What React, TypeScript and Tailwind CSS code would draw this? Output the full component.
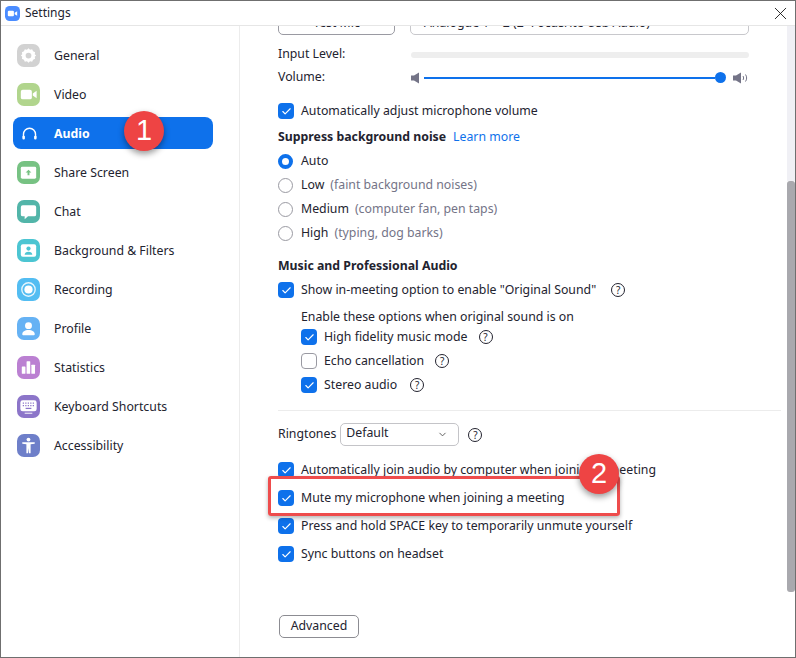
import { Check, ChevronDown, X } from "lucide-react";
import type { ReactNode } from "react";

function Tile({ color, children }: { color: string; children?: ReactNode }) {
  return (
    <div className={`flex h-[23px] w-[23px] shrink-0 items-center justify-center rounded-[7px] ${color}`}>
      <svg viewBox="0 0 24 24" className="h-[23px] w-[23px]" fill="#fff">
        {children}
      </svg>
    </div>
  );
}

const navItems: { label: string; color: string; icon: ReactNode }[] = [
  {
    label: "General",
    color: "bg-[#d2d2d2]",
    icon: (
      <path
        fillRule="evenodd"
        d="M12 4.500l1.600 1.600 2.200-.5 1 2 2.100.9-.4 2.200L20 12l-1.500 1.300.4 2.200-2.100.9-1 2-2.200-.5L12 19.500l-1.600-1.600-2.200.5-1-2-2.100-.9.4-2.200L4 12l1.500-1.300-.4-2.200 2.100-.9 1-2 2.200.5zM12 9a3 3 0 1 0 0 6 3 3 0 0 0 0-6z"
      />
    ),
  },
  {
    label: "Video",
    color: "bg-[#b1d58d]",
    icon: (
      <>
        <rect x="4" y="7" width="11.500" height="10" rx="2" />
        <path d="M16.500 11l4-3v8l-4-3z" />
      </>
    ),
  },
  {
    label: "Share Screen",
    color: "bg-[#77c283]",
    icon: (
      <>
        <rect x="4" y="6" width="16" height="12.500" rx="1.500" />
        <path fill="#77c283" d="M12 9l3 3h-2v2.800h-2V12H9z" />
      </>
    ),
  },
  {
    label: "Chat",
    color: "bg-[#52b5a9]",
    icon: <path d="M6 5.500h12a2 2 0 0 1 2 2v7.500a2 2 0 0 1-2 2h-6.500L8 20v-3H6a2 2 0 0 1-2-2V7.500a2 2 0 0 1 2-2z" />,
  },
  {
    label: "Background & Filters",
    color: "bg-[#4cc5d2]",
    icon: (
      <>
        <rect x="4" y="5.500" width="16" height="13" rx="2" />
        <circle cx="12" cy="10" r="2.200" fill="#4cc5d2" />
        <path fill="#4cc5d2" d="M8 16.500c0-2.200 1.800-3.300 4-3.300s4 1.100 4 3.300z" />
      </>
    ),
  },
  {
    label: "Recording",
    color: "bg-[#53bdf2]",
    icon: (
      <>
        <circle cx="12" cy="12" r="7" fill="none" stroke="#fff" strokeWidth="1.400" opacity=".85" />
        <circle cx="12" cy="12" r="4.300" />
      </>
    ),
  },
  {
    label: "Profile",
    color: "bg-[#66b2f4]",
    icon: (
      <>
        <circle cx="12" cy="9" r="3.600" />
        <path d="M5.500 18c0-2.800 2.600-4.500 6.500-4.500s6.500 1.700 6.500 4.500c0 .8-.6 1-1.200 1H6.700c-.6 0-1.200-.2-1.200-1z" />
      </>
    ),
  },
  {
    label: "Statistics",
    color: "bg-[#bb80d2]",
    icon: (
      <>
        <rect x="5" y="11" width="3.800" height="7.500" rx=".6" />
        <rect x="10" y="5.500" width="3.800" height="13" rx=".6" />
        <rect x="15" y="9" width="3.800" height="9.500" rx=".6" />
      </>
    ),
  },
  {
    label: "Keyboard Shortcuts",
    color: "bg-[#8c75c9]",
    icon: (
      <>
        <rect x="3.500" y="5.500" width="17" height="11.500" rx="2.500" />
        <path stroke="#8c75c9" strokeWidth="1.300" strokeDasharray="1.300 1.300" fill="none" d="M6 8.500h12M6 11h12" />
        <path stroke="#8c75c9" strokeWidth="1.300" d="M9 14h6" />
        <path d="M8 18.500h8v1H8z" />
      </>
    ),
  },
  {
    label: "Accessibility",
    color: "bg-[#6e7fc9]",
    icon: (
      <>
        <circle cx="12" cy="5.800" r="2" />
        <path d="M5.500 8.500h13v1.700l-4.300.6V20h-1.700l-.5-5.500-.5 5.500H9.800v-9.200l-4.300-.6z" />
      </>
    ),
  },
];

function NavRow({ label, color, icon }: { label: string; color: string; icon: ReactNode }) {
  return (
    <div className="flex h-[39px] items-center pl-[16px]">
      <Tile color={color}>{icon}</Tile>
      <span className="ml-[14px] pt-[2px] text-[#23232f]">{label}</span>
    </div>
  );
}

function Box({ checked = true }: { checked?: boolean }) {
  if (!checked) {
    return <div className="h-4 w-4 shrink-0 rounded-[4px] border border-[#9a9aa2] bg-white" />;
  }
  return (
    <div className="flex h-4 w-4 shrink-0 items-center justify-center rounded-[4px] bg-[#0e71eb]">
      <Check size={11} strokeWidth={2.500} className="text-white" />
    </div>
  );
}

function Help({ className = "" }: { className?: string }) {
  return (
    <div
      className={`flex h-[14px] w-[14px] shrink-0 items-center justify-center rounded-full border border-[#23232f] text-[10px] leading-none text-[#23232f] ${className}`}
    >
      ?
    </div>
  );
}

function CheckRow({
  label,
  checked,
  help,
  className = "",
}: {
  label: string;
  checked?: boolean;
  help?: string;
  className?: string;
}) {
  return (
    <div className={`flex items-center ${className}`}>
      <Box checked={checked} />
      <span className="ml-[7px]">{label}</span>
      {help && <Help className={help} />}
    </div>
  );
}

function Radio({ label, note, active }: { label: string; note?: string; active?: boolean }) {
  return (
    <div className="flex h-6 items-center">
      {active ? (
        <div className="h-[15px] w-[15px] shrink-0 rounded-full border-[4px] border-[#0e71eb] bg-white" />
      ) : (
        <div className="h-[15px] w-[15px] shrink-0 rounded-full border border-[#9a9aa2] bg-white" />
      )}
      <span className="ml-2">{label}</span>
      {note && <span className="ml-[6px] text-[#747487]">{note}</span>}
    </div>
  );
}

function Speaker({ waves }: { waves?: boolean }) {
  return (
    <svg viewBox={waves ? "0 0 16 12" : "0 0 8 12"} className={waves ? "h-[12px] w-[16px]" : "h-[12px] w-[8px]"} fill="#747487">
      <path d="M0 3.500h3L8 .500v11l-5-3H0z" />
      {waves && <path d="M10 4c.8 1.200.8 2.800 0 4M12.500 2.500c1.500 2 1.500 5 0 7" fill="none" stroke="#747487" strokeWidth="1" />}
    </svg>
  );
}

const badge =
  "absolute flex h-10 w-10 items-center justify-center rounded-full bg-[#ee4444] font-['Liberation_Sans'] text-[29px] text-white shadow-[0_3px_6px_rgba(0,0,0,0.4)]";

export default function App() {
  return (
    <div
      className="relative flex h-[658px] w-[796px] flex-col overflow-hidden border border-[#6f6f6f] bg-white text-[12.3px] text-[#23232f]"
      style={{ fontFamily: '"Noto Sans", "Open Sans", sans-serif' }}
    >
      <div className="relative z-10 flex h-[25px] shrink-0 items-center border-b border-[#e6e6e6] bg-white pl-[4px]">
        <svg viewBox="0 0 16 16" className="h-[15px] w-[15px]">
          <rect width="16" height="16" rx="5" fill="#4a8cff" />
          <rect x="3" y="5" width="6.500" height="6" rx="1.200" fill="#fff" />
          <path d="M10.300 7.300L13 5.500v5l-2.700-1.800z" fill="#fff" />
        </svg>
        <span className="ml-[5px] text-[12px]">Settings</span>
        <X size={21} strokeWidth={1} className="ml-auto mr-[4px] text-[#111]" />
      </div>

      <div className="flex min-h-0 flex-1">
        <aside className="w-[239px] shrink-0 border-r border-[#ececec] pt-[10px]">
          <NavRow {...navItems[0]} />
          <NavRow {...navItems[1]} />
          <div className="ml-3 mb-[4px] mt-[3px] flex h-8 w-[200px] items-center rounded-lg bg-[#0e71eb] pl-[8px] font-bold text-white">
            <svg viewBox="0 0 24 24" className="h-[17px] w-[17px]" fill="none" stroke="#fff" strokeWidth="2">
              <path d="M3.500 18v-5a8.500 8.500 0 0 1 17 0v5" />
              <rect x="2" y="15" width="3.500" height="5.500" rx="1.500" fill="#fff" stroke="none" />
              <rect x="18.500" y="15" width="3.500" height="5.500" rx="1.500" fill="#fff" stroke="none" />
            </svg>
            <span className="ml-[16px] pt-[2px]">Audio</span>
          </div>
          {navItems.slice(2).map((item) => (
            <NavRow key={item.label} {...item} />
          ))}
        </aside>

        <main className="min-w-0 flex-1 overflow-hidden pl-[38px] pr-[38px]">
          <div className="-mt-[19px] flex h-[28px] gap-[15px]">
            <div className="flex w-[117px] items-center justify-center rounded-[5px] border border-[#9a9aa2] pt-[4px]">Test Mic</div>
            <div className="flex flex-1 items-center rounded-[5px] border border-[#c8c8cc] pl-[13px] pt-[4px]">
              Analogue 1 + 2 (2- Focusrite Usb Audio)
            </div>
          </div>

          <div className="mt-2 flex h-[23px] items-center">
            <span className="w-[133px]">Input Level:</span>
            <div className="h-[6px] flex-1 rounded-full bg-[#eeeeee]" />
          </div>
          <div className="flex h-[23px] items-center">
            <span className="w-[133px]">Volume:</span>
            <div className="flex flex-1 items-center">
              <Speaker />
              <div className="ml-[5px] h-[2px] flex-1 bg-[#0e71eb]" />
              <div className="h-[11px] w-[11px] rounded-full bg-[#0e71eb]" />
              <div className="ml-[7px] flex">
                <Speaker waves />
              </div>
            </div>
          </div>

          <CheckRow label="Automatically adjust microphone volume" className="mt-3 h-5" />
          <div className="mt-[6px] flex h-5 items-center">
            <span className="font-bold">Suppress background noise</span>
            <span className="ml-[7px] text-[#0e71eb]">Learn more</span>
          </div>
          <div className="mt-[2px]">
            <Radio label="Auto" active />
            <Radio label="Low" note="(faint background noises)" />
            <Radio label="Medium" note="(computer fan, pen taps)" />
            <Radio label="High" note="(typing, dog barks)" />
          </div>

          <div className="mt-[11px] flex h-5 items-center font-bold">Music and Professional Audio</div>
          <CheckRow label={'Show in-meeting option to enable "Original Sound"'} help="ml-[15px]" className="mt-[4px] h-5" />
          <div className="ml-[23px] mt-[7px] flex h-5 items-center">Enable these options when original sound is on</div>
          <div className="ml-[23px] -mt-[2px]">
            <CheckRow label="High fidelity music mode" help="ml-[11px]" className="h-6" />
            <CheckRow label="Echo cancellation" checked={false} help="ml-[11px]" className="h-6" />
            <CheckRow label="Stereo audio" help="ml-[13px]" className="h-6" />
          </div>

          <div className="-mr-[32px] mt-[13px] h-px bg-[#ececec]" />

          <div className="mt-3 flex h-[23px] items-center">
            <span>Ringtones</span>
            <div className="ml-[4px] flex h-[23px] w-[119px] items-center rounded-[5px] border border-[#c4c4c8] pl-[5px] pr-[10px]">
              <span className="-mt-[2px]">Default</span>
              <ChevronDown size={11} className="ml-auto text-[#555]" />
            </div>
            <Help className="ml-[9px]" />
          </div>

          <CheckRow label="Automatically join audio by computer when joining a meeting" className="mt-[14px] h-5" />
          <CheckRow label="Mute my microphone when joining a meeting" className="mt-2 h-5" />
          <CheckRow label="Press and hold SPACE key to temporarily unmute yourself" className="mt-2 h-5" />
          <CheckRow label="Sync buttons on headset" className="mt-2 h-5" />

          <div className="ml-[1px] mt-[51px] flex h-[23px] w-[80px] items-center justify-center rounded-[5px] border border-[#8c8c92]">
            Advanced
          </div>
        </main>

        <div className="flex w-2 shrink-0 flex-col">
          <div className="h-[155px] bg-[#f0f0f5]" />
          <div className="h-[411px] rounded-[3px] bg-[#a9a9ae]" />
        </div>
      </div>

      {/* annotations sitting on top of the screenshot */}
      <div className={`${badge} left-[123px] top-[110px]`}>1</div>
      <div className="absolute left-[267px] top-[475px] h-[40px] w-[352px] rounded-[3px] border-[3px] border-[#ee4c4c] shadow-[0_2px_4px_rgba(0,0,0,0.3)]" />
      <div className={`${badge} left-[578px] top-[453px]`}>2</div>
    </div>
  );
}
